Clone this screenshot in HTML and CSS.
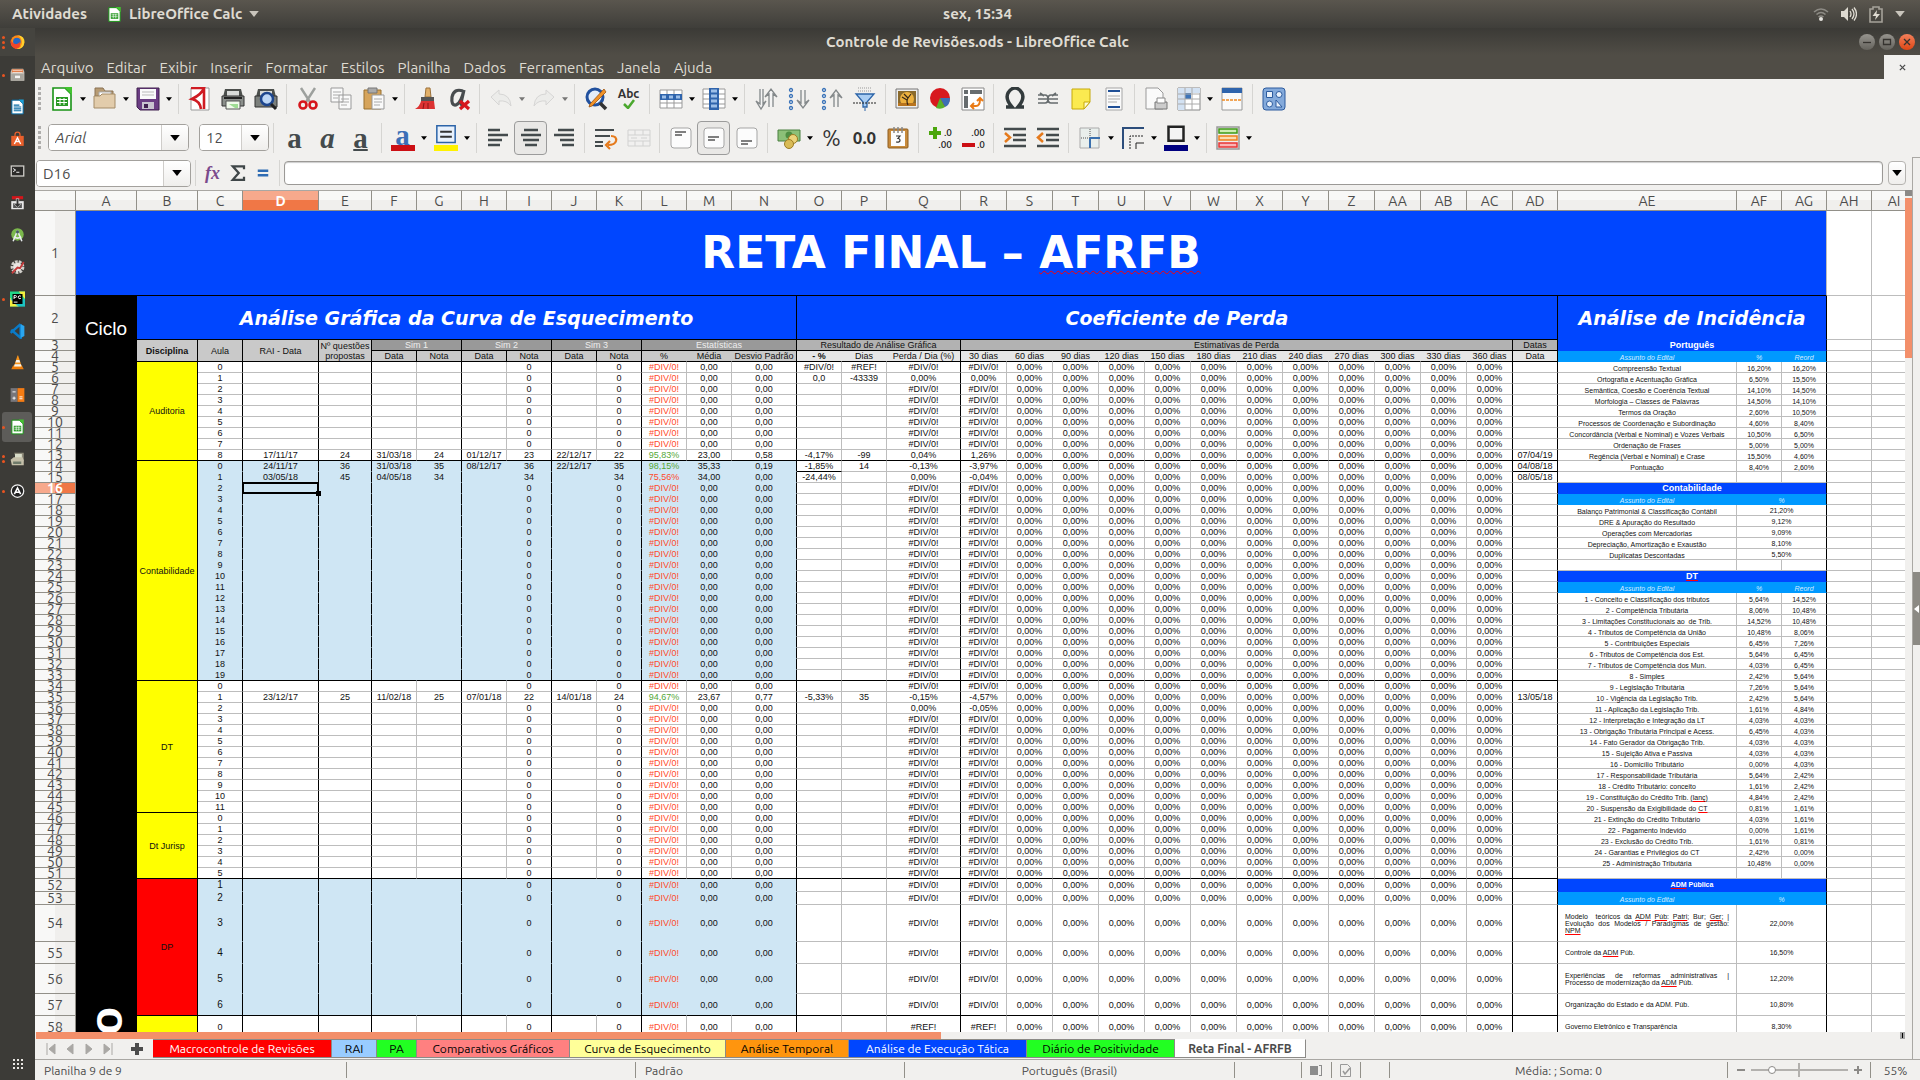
FILE: index.html
```html
<!DOCTYPE html>
<html lang="pt-BR">
<head>
<meta charset="utf-8">
<title>Controle de Revisões.ods - LibreOffice Calc</title>
<link rel="stylesheet" href="styles.css">
</head>
<body>
<svg class="defs" aria-hidden="true">
  <defs>
    <symbol id="down" viewBox="0 0 8 5"><path d="M0 0h8L4 5z"/></symbol>
    <symbol id="calc" viewBox="0 0 24 24"><path d="M3 1h12l6 6v16H3z" fill="#fff" stroke="#189315" stroke-width="1.6"/><path d="M14 0h8v8z" fill="#43c330"/><path d="M6 10h12v9H6z" fill="#2a9a25"/><path d="M7 12.500h10M7 15.500h10M10 11v7M14 11v7" stroke="#fff"/></symbol>
    <symbol id="page" viewBox="0 0 24 24"><path d="M4 1h16v22H4z" fill="#fafafa" stroke="#a5a5a5"/></symbol>
    <symbol id="lines" viewBox="0 0 24 24"><path d="M2 4h12M2 9h20M2 14h14M2 19h12" stroke="#444b4d" stroke-width="2.400"/></symbol>
  </defs>
</svg>

<header class="topbar">
  <div class="topbar-left">
    <button class="plain">Atividades</button>
    <button class="plain app"><svg class="i14"><use href="#calc"/></svg>LibreOffice Calc<svg class="tri-light"><use href="#down"/></svg></button>
  </div>
  <time class="clock">sex, 15:34</time>
  <div class="tray">
    <svg width="16" height="16" viewBox="0 0 16 16" fill="none" stroke="#8d8b85" stroke-width="1.600"><path d="M1 6q7-6 14 0M3.500 8.500q4.500-4 9 0"/><circle cx="8" cy="13" r="2" fill="#e6e4df" stroke="none"/><path d="M5.500 11q2.500-2 5 0"/></svg>
    <svg width="16" height="16" viewBox="0 0 16 16"><path d="M0 5h3l4-4v14l-4-4H0z" fill="#dfdbd2"/><path d="M9 5q2 3 0 6M11 3q4 5 0 10M13 1.500q5 6.500 0 13" fill="none" stroke="#dfdbd2" stroke-width="1.300"/></svg>
    <svg width="14" height="17" viewBox="0 0 14 17"><path d="M4 1h6v2h3v13H1V3h3z" fill="none" stroke="#a5a29a" stroke-width="1.600"/><path d="M8 4 3.500 10H7l-1 4 5-6H7.500z" fill="#dfdbd2"/></svg>
    <svg class="tri-light"><use href="#down"/></svg>
  </div>
</header>

<div class="desktop">
  <nav class="launcher" aria-label="Lançador">
    <ul>
      <li class="dim"><i class="dots three"></i><svg viewBox="0 0 24 24"><circle cx="12" cy="12" r="11" fill="#ff8a16"/><path d="M12 1q12 1 11 12-2 11-13 10 10-2 9-12-1-7-7-10z" fill="#ffd22e"/><circle cx="11" cy="11" r="6" fill="#2567c4"/><path d="M1 8q3 8 10 7 4-1 4-4 4 10-6 12Q0 20 1 8z" fill="#f0452a"/></svg></li>
      <li><i class="dots"></i><svg viewBox="0 0 24 24"><path d="M3 2h18l2 5v14H1V7z" fill="#c9c5bd"/><path d="M3 3h18v5H3z" fill="#e0743c"/><path d="M4 5h16M4 8h16" stroke="#fff"/><path d="M2 10h20v11H2z" fill="#a8a59e"/><path d="M8 13h8v4H8z" fill="#f5f4f2"/></svg></li>
      <li><svg viewBox="0 0 24 24"><path d="M3 1h12l6 6v16H3z" fill="#fff" stroke="#0369a3" stroke-width="1.600"/><path d="M14 0h8v8z" fill="#18a0d8"/><path d="M6 9h9M6 12h12M6 15h12M6 18h12" stroke="#0369a3" stroke-width="1.800"/></svg></li>
      <li><svg viewBox="0 0 24 24"><path d="M2 7h20v16H2z" fill="#e9602c"/><path d="M8 8V5q0-4 4-4t4 4v3" fill="none" stroke="#e9602c" stroke-width="2"/><path d="m7 20 5-10 5 10M9 16h6" fill="none" stroke="#fff" stroke-width="2.200"/></svg></li>
      <li><svg viewBox="0 0 24 24"><path d="M1 3h22v18H1z" fill="#d4d2cd"/><path d="M3 5h18v14H3z" fill="#2b2a28"/><path d="m5 8 4 2.500L5 13M10 14h5" fill="none" stroke="#fff" stroke-width="1.500"/></svg></li>
      <li><svg viewBox="0 0 24 24"><path d="M2 9h20v13H2z" fill="#e8e8e8"/><path d="M5 12h14v8H5z" fill="#555"/><path d="M3 1h18v5H3z" fill="#d3161b"/><path d="M10 5h4v8h4l-6 6-6-6h4z" fill="#333" stroke="#ddd"/></svg></li>
      <li><svg viewBox="0 0 24 24"><circle cx="12" cy="11" r="10" fill="#7bb84c"/><path d="m12 5-7 17M12 5l7 17M6 15q6 4 12 0" fill="none" stroke="#e9eef0" stroke-width="2.400"/><circle cx="12" cy="7" r="2.500" fill="#4a5b66"/></svg></li>
      <li><svg viewBox="0 0 24 24"><circle cx="12" cy="12" r="8" fill="none" stroke="#d2d0cb" stroke-width="6" stroke-dasharray="4 1.500"/><circle cx="12" cy="12" r="7" fill="#e8e6e2"/><path d="m3 22 9-9 4 1 6-10" fill="none" stroke="#c23a3a" stroke-width="3"/></svg></li>
      <li><i class="dots"></i><svg viewBox="0 0 24 24"><path d="M0 0h24v24H0z" fill="#21d789"/><path d="M14 0h10v12zM0 24h14L0 10z" fill="#f5ee3f"/><path d="M0 12 12 24h12V12z" fill="#1ab6e8" opacity=".6"/><path d="M4 4h16v16H4z"/><path d="M6.500 12V6.500h2q2 0 2 1.500t-2 1.500h-2M17.500 7.500q-4-2-4.500 1.500.500 4 4.500 2M6 17h6" fill="none" stroke="#fff" stroke-width="1.500"/></svg></li>
      <li><svg viewBox="0 0 24 24"><path d="M17 1v22L2 10M17 1 1 15" fill="none" stroke="#0a7bc8" stroke-width="4"/><path d="m17 1 6 3v16l-6 3z" fill="#2aa5ee"/></svg></li>
      <li><svg viewBox="0 0 24 24"><path d="m2 22 3-6h14l3 6z" fill="#ee7d0b"/><path d="M12 0h1l6 18H6z" fill="#f7941c"/><path d="m10 7-1.300 4h7.600L15 7zM7.500 14l-1 3.500h12l-1-3.500z" fill="#f4f2ee"/></svg></li>
      <li><svg viewBox="0 0 24 24"><path d="M1 1h11v22H1z" fill="#77767b"/><path d="M12 1h11v22H12z" fill="#f57c14"/><path d="M4 7h5M4 17h5M6.500 14.500v5M15 15h5M15 18h5" stroke="#fff" stroke-width="1.500"/></svg></li>
      <li class="active"><i class="dots"></i><svg><use href="#calc"/></svg></li>
      <li><i class="dots two"></i><svg viewBox="0 0 24 24"><path d="M7 2h15v14H10z" fill="#8d8a7a"/><path d="M8 4h11v7H8z" fill="#d8dcc8"/><path d="m1 13 5-4h14l2 5v8H3z" fill="#c4bfa9"/><path d="M5 16h13v4H5z" fill="#6e7a6a"/></svg></li>
      <li><i class="dots"></i><svg viewBox="0 0 24 24"><circle cx="12" cy="12" r="10" fill="#222" stroke="#f2f2f2" stroke-width="2"/><path d="m7 17 5-10 5 10M9 14h6" fill="none" stroke="#fff" stroke-width="2.500"/></svg></li>
    </ul>
    <svg class="apps" viewBox="0 0 12 12"><path d="M1 2h10M1 6h10M1 10h10" stroke="#e8e6e2" stroke-width="2" stroke-dasharray="2 2"/></svg>
  </nav>

  <main class="window">
    <div class="titlebar">
      <h1>Controle de Revisões.ods - LibreOffice Calc</h1>
      <div class="winbtns">
        <button aria-label="Minimizar"><svg viewBox="0 0 16 16"><path d="M4 8.500h8"/></svg></button>
        <button aria-label="Restaurar"><svg viewBox="0 0 16 16"><path d="M4.500 5.500h7v5h-7z"/></svg></button>
        <button class="close" aria-label="Fechar"><svg viewBox="0 0 16 16"><path d="m5 5 6 6M11 5l-6 6"/></svg></button>
      </div>
    </div>

    <div class="menubar">
      <nav>
        <button>Arquivo</button><button>Editar</button><button>Exibir</button><button>Inserir</button><button>Formatar</button><button>Estilos</button><button>Planilha</button><button>Dados</button><button>Ferramentas</button><button>Janela</button><button>Ajuda</button>
      </nav>
      <button class="closedoc" aria-label="Fechar documento"><svg viewBox="0 0 8 8"><path d="m1 1 6 6M7 1 1 7" stroke="#4c4c4c" stroke-width="1.500"/></svg></button>
    </div>

    <div class="toolbar">
      <i class="grip"></i>
      <button aria-label="Novo"><svg><use href="#calc"/></svg></button><button class="dd" aria-label="Mais"><svg><use href="#down"/></svg></button>
      <button aria-label="Abrir"><svg viewBox="0 0 24 24"><path d="M2 4V1h8l2 3h8v5H2z" fill="#b79b73" stroke="#8a7355"/><path d="M6 5h12v8H6z" fill="#fff" stroke="#aaa"/><path d="M1 9h6l2-2h13v14H1z" fill="#e2ccab" stroke="#a48b67"/></svg></button><button class="dd" aria-label="Mais"><svg><use href="#down"/></svg></button>
      <button aria-label="Salvar"><svg viewBox="0 0 24 24"><path d="M1 1h22v22H4l-3-3z" fill="#6b3d83" stroke="#41204f"/><path d="M4 2h16v10H4z" fill="#fafafa"/><path d="M6 5h12M6 8h12" stroke="#bbb"/><path d="M6 15h12v7H6z" fill="#c9c3cf"/><path d="M8 17h4v4H8z" fill="#41204f"/></svg></button><button class="dd" aria-label="Mais"><svg><use href="#down"/></svg></button>
      <i class="sep"></i>
      <button aria-label="Exportar PDF"><svg viewBox="0 0 24 24"><path d="M3 1h18v22H3z" fill="#fff" stroke="#999"/><path d="M3 1h13q-2 6-12 11 8 2 9 10M16 2v20" fill="none" stroke="#cf1b22" stroke-width="2.600"/></svg></button>
      <button aria-label="Imprimir"><svg viewBox="0 0 24 24"><path d="M4 2h16l2 8H2z" fill="#4c4f4c"/><path d="M6 4h12v6H6z" fill="#d9dbd9"/><path d="M1 9h22v10H1z" fill="#8b8f8b" stroke="#333"/><path d="M3 11h18" stroke="#222" stroke-width="2"/><path d="M5 14h14v8H5z" fill="#f1faec" stroke="#555"/><path d="m8 17 6 4h3v-4z" fill="#9fdc94"/></svg></button>
      <button aria-label="Visualizar impressão"><svg viewBox="0 0 24 24"><path d="M4 2h16l2 8H2z" fill="#4c4f4c"/><path d="M6 4h12v6H6z" fill="#d9dbd9"/><path d="M1 9h22v11H1z" fill="#7b7f7b" stroke="#333"/><circle cx="13" cy="12" r="6" fill="#bcd6f5" stroke="#1d468e" stroke-width="2.500"/><path d="m17 17 5 5" stroke="#222" stroke-width="3"/></svg></button>
      <i class="sep"></i>
      <button aria-label="Cortar"><svg viewBox="0 0 24 24" fill="none"><path d="m5 1 9 14M19 1l-9 14" stroke="#9da09d" stroke-width="2.400"/><circle cx="7" cy="18" r="3.500" stroke="#d6161c" stroke-width="2.600"/><circle cx="17" cy="18" r="3.500" stroke="#d6161c" stroke-width="2.600"/></svg></button>
      <button aria-label="Copiar"><svg viewBox="0 0 24 24"><path d="M2 1h12v14H2zM10 8h12v14H10z" fill="#fafafa" stroke="#999"/><path d="M4 5h8M4 8h6M4 11h5M12 12h8M12 15h8M12 18h6" stroke="#aaa"/></svg></button>
      <button aria-label="Colar"><svg viewBox="0 0 24 24"><path d="M2 3h17v19H2z" fill="#d6a45b" stroke="#99702f"/><path d="M6 1h9v5H6z" fill="#aaa" stroke="#777"/><path d="M10 8h12v14H10z" fill="#fafafa" stroke="#999"/><path d="M12 12h8M12 15h8M12 18h6" stroke="#aaa"/></svg></button><button class="dd" aria-label="Mais"><svg><use href="#down"/></svg></button>
      <i class="sep"></i>
      <button aria-label="Clonar formatação"><svg viewBox="0 0 24 24"><path d="M12 1h4l1 9h-6z" fill="#e2b069" stroke="#9b713b"/><path d="M7 10h13v4H7z" fill="#555"/><path d="M7 14h13l1 8H1q5-3 6-8z" fill="#dc3232"/><path d="m9 22 1-6M14 22v-6" stroke="#8a1515"/></svg></button>
      <button aria-label="Limpar formatação"><svg viewBox="0 0 24 24" fill="none"><path d="M16 4q-9-3-11 6-1 9 4 8 5-2 8-15l-3 13q0 3 3 2" stroke="#484c4e" stroke-width="3.200"/><path d="m13 14 9 8M22 14l-9 8" stroke="#d6161c" stroke-width="3.200"/></svg></button>
      <i class="sep"></i>
      <button class="off" aria-label="Desfazer"><svg viewBox="0 0 24 24" fill="#e9e9e8" stroke="#bcbcbc"><path d="m2 10 8-7v4q11 0 12 12-4-6-12-5v4z"/></svg></button><button class="dd off" aria-label="Mais"><svg><use href="#down"/></svg></button>
      <button class="off" aria-label="Refazer"><svg viewBox="0 0 24 24" fill="#e9e9e8" stroke="#bcbcbc"><path d="m22 10-8-7v4Q3 7 2 19q4-6 12-5v4z"/></svg></button><button class="dd off" aria-label="Mais"><svg><use href="#down"/></svg></button>
      <i class="sep"></i>
      <button aria-label="Localizar"><svg viewBox="0 0 24 24"><circle cx="11" cy="10" r="8" fill="#e4eefb" stroke="#22519e" stroke-width="3"/><path d="m16 16 6 6" stroke="#333" stroke-width="3.500"/><path d="M20 2 6 17l-1 3 3-1L22 5z" fill="#f0932b" stroke="#9d5410" stroke-width=".8"/></svg></button>
      <button class="abc" aria-label="Ortografia"><span>Abc</span><svg viewBox="0 0 14 10"><path d="m2 5 4 4 6-8" fill="none" stroke="#4ba82e" stroke-width="2.500"/></svg></button>
      <i class="sep"></i>
      <button aria-label="Linha"><svg viewBox="0 0 24 24"><path d="M1 3h22v18H1zM1 16h22M8 3v18M15 3v18" fill="#fff" stroke="#999"/><path d="M1 7h22v6H1z" fill="#2f64ac"/><path d="M3 10h4M10 10h4M17 10h4" stroke="#9dbfe8" stroke-width="3"/></svg></button><button class="dd" aria-label="Mais"><svg><use href="#down"/></svg></button>
      <button aria-label="Coluna"><svg viewBox="0 0 24 24"><path d="M1 2h22v19H1zM1 7h22M1 12h22M1 17h22" fill="#fff" stroke="#999"/><path d="M7 1h10v22H7z" fill="#2f64ac"/><path d="M9 4h6M9 9h6M9 14h6M9 19h6" stroke="#9dbfe8" stroke-width="3"/></svg></button><button class="dd" aria-label="Mais"><svg><use href="#down"/></svg></button>
      <i class="sep"></i>
      <button aria-label="Classificar"><svg viewBox="0 0 24 24" fill="#f4f4f4" stroke="#83888a" stroke-width="1.300"><path d="M6 2v15l-4-3 5 8 5-8-3 3V2M15 20V7l-4 3 6-8 6 8-4-3v13"/></svg></button>
      <button aria-label="Ordem crescente"><svg viewBox="0 0 24 24" fill="none" stroke="#3a73b9" stroke-width="1.300"><circle cx="4" cy="3" r="1.500"/><circle cx="4" cy="9" r="1.500"/><circle cx="4" cy="15" r="1.500"/><circle cx="4" cy="21" r="1.500"/><path d="M14 3v13l-4-3 6 8 6-8-4 3V3" stroke="#83888a"/></svg></button>
      <button aria-label="Ordem decrescente"><svg viewBox="0 0 24 24" fill="none" stroke="#3a73b9" stroke-width="1.300"><circle cx="4" cy="3" r="1.500"/><circle cx="4" cy="9" r="1.500"/><circle cx="4" cy="15" r="1.500"/><circle cx="4" cy="21" r="1.500"/><path d="M14 20V8l-4 3 6-8 6 8-4-3v12" stroke="#83888a"/></svg></button>
      <button aria-label="Autofiltro"><svg viewBox="0 0 24 24"><path d="M5 1h14M5 4h14" stroke="#999" stroke-dasharray="1 1"/><path d="M3 7h18l-7 8v5h-4v-5z" fill="#a9cdf3" stroke="#2c64a8" stroke-width="1.300"/><path d="M0 16h24" stroke="#222" stroke-dasharray="2 1"/><path d="M12 21v3" stroke="#2c64a8"/></svg></button>
      <i class="sep"></i>
      <button aria-label="Imagem"><svg viewBox="0 0 24 24"><path d="M1 2h22v19H1z" fill="#eee" stroke="#777"/><path d="M3 4h18v15H3z" fill="#8a6a2c"/><circle cx="12" cy="12" r="7" fill="#edb13f"/><path d="M3 16h18v3H3z" fill="#b8741e"/><path d="M13 18q-2-4 0-7l3-4M13 11 9 7M12 13l-5-3" fill="none" stroke="#372716" stroke-width="1.200"/></svg></button>
      <button aria-label="Gráfico"><svg viewBox="0 0 24 24"><circle cx="12" cy="11" r="10" fill="#d7191e"/><path d="M12 11h10q0 7-5 9z" fill="#3d6fb5"/><path d="m12 11 5 9q-4 3-9 1z" fill="#58b32b"/></svg></button>
      <button aria-label="Tabela dinâmica"><svg viewBox="0 0 24 24"><path d="M1 1h22v22H1z" fill="#fff" stroke="#888"/><path d="M3 3h4v4H3zM9 3h12v4H9zM3 9h4v12H3z" fill="#676c6e"/><path d="M11 19h4q4 0 4-7M16 14l3-3 3 3M13 16l-3 3 3 3" fill="none" stroke="#ea7b16" stroke-width="2"/></svg></button>
      <i class="sep"></i>
      <button aria-label="Caractere especial"><svg viewBox="0 0 24 24"><path d="M3 20h6Q2 12 5 6q3-5 7-5t7 5q3 6-4 14h6" fill="none" stroke="#333b3d" stroke-width="3.500"/></svg></button>
      <button aria-label="Hiperlink"><svg viewBox="0 0 24 24" fill="none" stroke="#656b6d" stroke-width="1.700"><path d="M2 8h7q3 0 3 4t-3 4H2M22 8h-7q-3 0-3 4t3 4h7M2 12h20M4 6l4 3M20 6l-4 3"/></svg></button>
      <button aria-label="Anotação"><svg viewBox="0 0 24 24"><path d="M3 2h18v13l-6 7H3z" fill="#fbea50" stroke="#c6a90b"/><path d="M21 15h-6v7z" fill="#fffbd0" stroke="#c6a90b"/></svg></button>
      <button aria-label="Cabeçalho e rodapé"><svg viewBox="0 0 24 24"><use href="#page"/><path d="M6 4h12M6 20h12" stroke="#1f4f96" stroke-width="2"/><path d="M6 9h12M6 12h12M6 15h9" stroke="#aaa"/></svg></button>
      <i class="sep"></i>
      <button aria-label="Área de impressão"><svg viewBox="0 0 24 24"><path d="M2 1h12l5 5v16H2z" fill="#fafafa" stroke="#999"/><path d="M11 15h12v7H11z" fill="#ccc" stroke="#777"/><path d="M13 11h8v5h-8z" fill="#fff" stroke="#888"/></svg></button>
      <button aria-label="Congelar"><svg viewBox="0 0 24 24"><path d="M1 1h22v22H1z" fill="#fff" stroke="#888"/><path d="M1 1h22v5H1zM1 6h7v17H1z" fill="#d3e2f3"/><path d="M8 6h6v6H8z" fill="#3d74b8"/><path d="M8 1v22M15 1v22M1 7h22M1 12h22M1 17h22" stroke="#aaa" fill="none"/></svg></button><button class="dd" aria-label="Mais"><svg><use href="#down"/></svg></button>
      <button aria-label="Dividir"><svg viewBox="0 0 24 24"><path d="M2 1h20v22H2z" fill="#fafafa" stroke="#999"/><path d="M2 1h20v5H2z" fill="#2f64ac"/><path d="M2 13h20" stroke="#ef8a22" stroke-width="1.500" stroke-dasharray="3 1"/></svg></button>
      <i class="sep"></i>
      <button aria-label="Desenho"><svg viewBox="0 0 24 24"><rect x="1" y="1" width="22" height="22" rx="3" fill="#84aadb" stroke="#2c5b9e"/><g fill="#e9f1fb" stroke="#2c5b9e"><path d="M4.500 4.500h6v6h-6zM14 13v7h6z"/><circle cx="17" cy="7.500" r="3"/><circle cx="7.500" cy="17" r="3"/></g></svg></button>
    </div>

    <div class="toolbar">
      <i class="grip"></i>
      <div class="combo font"><select aria-label="Nome da fonte"><option>Arial</option></select><span><svg><use href="#down"/></svg></span></div>
      <div class="combo size"><select aria-label="Tamanho da fonte"><option>12</option></select><span><svg><use href="#down"/></svg></span></div>
      <i class="sep"></i>
      <button class="letter" aria-label="Negrito"><b>a</b></button>
      <button class="letter" aria-label="Itálico"><em>a</em></button>
      <button class="letter" aria-label="Sublinhado"><u>a</u></button>
      <i class="sep"></i>
      <button class="letter swatch red" aria-label="Cor da fonte"><b>a</b></button><button class="dd" aria-label="Mais"><svg><use href="#down"/></svg></button>
      <button class="swatch yellow" aria-label="Cor de realce"><svg viewBox="0 0 24 24"><path d="M1 1h22v20H1z" fill="#e8f1fc" stroke="#2c64a8" stroke-width="1.800"/><path d="M5 8h14M5 14h14" stroke="#333" stroke-width="2.400"/></svg></button><button class="dd" aria-label="Mais"><svg><use href="#down"/></svg></button>
      <i class="sep"></i>
      <button aria-label="Alinhar à esquerda"><svg><use href="#lines"/></svg></button>
      <button class="on" aria-label="Centralizar"><svg viewBox="0 0 24 24"><path d="M5 4h14M2 9h20M4 14h16M6 19h12" stroke="#444b4d" stroke-width="2.400"/></svg></button>
      <button aria-label="Alinhar à direita"><svg viewBox="0 0 24 24"><path d="M6 4h16M2 9h20M8 14h14M10 19h12" stroke="#444b4d" stroke-width="2.400"/></svg></button>
      <i class="sep"></i>
      <button aria-label="Quebrar texto"><svg viewBox="0 0 24 24" fill="none"><path d="M1 4h19M1 10h15M1 16h8M1 20h8" stroke="#444b4d" stroke-width="2.200"/><path d="M17 10q6 0 5 5-1 4-8 4M16 15l-4 4 4 4" stroke="#e57a1c" stroke-width="2.200"/></svg></button>
      <button class="off" aria-label="Mesclar"><svg viewBox="0 0 24 24" fill="#f1f1f1" stroke="#b5b5b5"><path d="M1 4h22v16H1zM1 9h22M1 15h22M8 4v5M16 4v5M8 15v5M16 15v5M4 12h6M14 12h6"/></svg></button>
      <i class="sep"></i>
      <button aria-label="Alinhar em cima"><svg viewBox="0 0 24 24"><rect x="2" y="2" width="20" height="20" rx="3" fill="#fcfcfc" stroke="#a5a5a5"/><path d="M6 6h11M6 9h7" stroke="#555" stroke-width="1.300"/></svg></button>
      <button class="on" aria-label="Centralizar verticalmente"><svg viewBox="0 0 24 24"><rect x="2" y="2" width="20" height="20" rx="3" fill="#fcfcfc" stroke="#a5a5a5"/><path d="M6 11h11M6 14h7" stroke="#555" stroke-width="1.300"/></svg></button>
      <button aria-label="Alinhar embaixo"><svg viewBox="0 0 24 24"><rect x="2" y="2" width="20" height="20" rx="3" fill="#fcfcfc" stroke="#a5a5a5"/><path d="M6 15h11M6 18h7" stroke="#555" stroke-width="1.300"/></svg></button>
      <i class="sep"></i>
      <button aria-label="Moeda"><svg viewBox="0 0 24 24"><path d="M1 4h22v11H1z" fill="#8cc078" stroke="#4b8040"/><circle cx="12" cy="9" r="3.500" fill="#4f8e43"/><circle cx="16" cy="13" r="4.500" fill="#ecd47b" stroke="#9c7c24"/><circle cx="12" cy="18" r="4.500" fill="#d9bb56" stroke="#9c7c24"/></svg></button><button class="dd" aria-label="Mais"><svg><use href="#down"/></svg></button>
      <button class="pct" aria-label="Porcentagem">%</button>
      <button class="num" aria-label="Número">0.0</button>
      <button aria-label="Data"><svg viewBox="0 0 24 24"><rect x="2" y="3" width="20" height="19" rx="1" fill="#c88b3c" stroke="#8d5d1e"/><path d="M5 5h14v15H5z" fill="#fcfcfc"/><path d="M8 1v6M12 1v6M16 1v6" stroke="#888" stroke-width="1.500"/><path d="M10 10h4l-2 2.500q2 0 2 2t-4 1.500" fill="none" stroke="#333" stroke-width="1.200"/></svg></button>
      <i class="sep"></i>
      <button class="dec" aria-label="Adicionar casa decimal"><svg viewBox="0 0 24 24"><path d="M7 1v12M1 7h12" stroke="#4ba60c" stroke-width="4"/></svg><span>.0<br>.00</span></button>
      <button class="dec" aria-label="Excluir casa decimal"><svg viewBox="0 0 24 24"><path d="M1 19h13" stroke="#cc0f14" stroke-width="4"/></svg><span>.00<br>.0</span></button>
      <i class="sep"></i>
      <button aria-label="Aumentar recuo"><svg viewBox="0 0 24 24" fill="none"><path d="M1 3h22M10 9h13M10 14h13M1 20h22" stroke="#444b4d" stroke-width="2.300"/><path d="m2 7 5 4.500L2 16" stroke="#e57a1c" stroke-width="2.500"/></svg></button>
      <button aria-label="Diminuir recuo"><svg viewBox="0 0 24 24" fill="none"><path d="M1 3h22M10 9h13M10 14h13M1 20h22" stroke="#444b4d" stroke-width="2.300"/><path d="m7 7-5 4.500L7 16" stroke="#e57a1c" stroke-width="2.500"/></svg></button>
      <i class="sep"></i>
      <button aria-label="Bordas"><svg viewBox="0 0 24 24"><path d="M2 2h19v20H2z" fill="#e9efec" stroke="#aaa"/><path d="M12 3v9M3 12h9" stroke="#555" stroke-dasharray="1 1"/><path d="M12 12h10M12 12v10" stroke="#3a70ad" stroke-width="2"/></svg></button><button class="dd" aria-label="Mais"><svg><use href="#down"/></svg></button>
      <button aria-label="Estilo de borda"><svg viewBox="0 0 24 24" fill="none"><path d="M2 23V2h21" stroke="#2c4d7b" stroke-width="2"/><path d="M9 23V10h14" stroke="#222" stroke-dasharray="2 1"/><path d="M15 23v-6h8" stroke="#222"/></svg></button><button class="dd" aria-label="Mais"><svg><use href="#down"/></svg></button>
      <button class="swatch navy" aria-label="Cor da borda"><svg viewBox="0 0 24 24"><path d="M3 2h18v17H3z" fill="#f4f4f4" stroke="#222" stroke-width="3"/></svg></button><button class="dd" aria-label="Mais"><svg><use href="#down"/></svg></button>
      <i class="sep"></i>
      <button aria-label="Formatação condicional"><svg viewBox="0 0 24 24" stroke-width="1.500"><path d="M1 1h22v22H1z" fill="#eee" stroke="#999"/><path d="M3 3h18v4H3z" fill="#cdeeb4" stroke="#3f9a16"/><path d="M3 10h18v4H3z" fill="#fbdcb1" stroke="#ef7f1a"/><path d="M3 17h18v4H3z" fill="#fbb4b4" stroke="#e83535"/></svg></button><button class="dd" aria-label="Mais"><svg><use href="#down"/></svg></button>
    </div>

    <div class="formulabar">
      <div class="combo name"><select aria-label="Caixa de nome"><option>D16</option></select><span><svg><use href="#down"/></svg></span></div>
      <i class="sep"></i>
      <button class="fx" aria-label="Assistente de funções">fx</button>
      <button aria-label="Soma"><svg viewBox="0 0 24 24"><path d="M20 7V3H5l8 9-8 9h15v-4" fill="none" stroke="#3f4648" stroke-width="3"/></svg></button>
      <button aria-label="Função"><svg viewBox="0 0 24 24"><path d="M5 9h14M5 15h14" stroke="#2f6cb3" stroke-width="3.500"/></svg></button>
      <i class="sep"></i>
      <input type="text" aria-label="Linha de entrada">
      <button class="expand" aria-label="Expandir"><svg><use href="#down"/></svg></button>
    </div>

    <div class="workarea">
      <div class="gridpane">
        <div class="sheetrow">
          <div class="sheetwrap"><table id="sheet"></table></div>
          <div class="vscroll"><i></i></div>
        </div>
        <div class="hscroll"><i></i><b></b></div>
        <div class="tabs">
          <div class="tabnav">
            <button aria-label="Primeira"><svg viewBox="0 0 10 12"><path d="M1 0v12M9 1v10L3 6z"/></svg></button>
            <button aria-label="Anterior"><svg viewBox="0 0 10 12"><path d="M8 1v10L2 6z"/></svg></button>
            <button aria-label="Próxima"><svg viewBox="0 0 10 12"><path d="M2 1v10l6-5z"/></svg></button>
            <button aria-label="Última"><svg viewBox="0 0 10 12"><path d="M9 0v12M1 1v10l6-5z"/></svg></button>
            <button class="add" aria-label="Adicionar planilha"><svg viewBox="0 0 12 12"><path d="M6 0v12M0 6h12"/></svg></button>
          </div>
          <button class="t1">Macrocontrole de Revisões</button><button class="t2">RAI</button><button class="t3">PA</button><button class="t4">Comparativos Gráficos</button><button class="t5">Curva de Esquecimento</button><button class="t6">Análise Temporal</button><button class="t7">Análise de Execução Tática</button><button class="t8">Diário de Positividade</button><button class="t9">Reta Final - AFRFB</button>
        </div>
      </div>
      <div class="sidebar"><button aria-label="Mostrar barra lateral"><svg viewBox="0 0 5 8"><path d="M5 0v8L0 4z" fill="#fff"/></svg></button></div>
    </div>

    <footer class="status">
      <span class="left">Planilha 9 de 9</span><span></span><span class="left">Padrão</span><span>Português (Brasil)</span><span></span>
      <span><svg width="13" height="11" viewBox="0 0 13 11"><path d="M0 1h8v9H0z" fill="#8c8c8c"/><path d="M9 .5h3M9 10.500h3M11.500 0v11" stroke="#8c8c8c"/></svg></span>
      <span><svg width="12" height="13" viewBox="0 0 12 13" fill="none" stroke="#999"><path d="M.5.500h7l3 3v9H.5z"/><path d="m3 7 2 3 5-6" stroke-width="1.500"/></svg></span>
      <span></span><span>Média: ; Soma: 0</span>
      <span class="zoom"><button aria-label="Reduzir"><svg viewBox="0 0 8 8"><path d="M0 4h8"/></svg></button><input type="range" min="0" max="100" value="20" aria-label="Zoom"><button aria-label="Ampliar"><svg viewBox="0 0 8 8"><path d="M0 4h8M4 0v8"/></svg></button></span>
      <span>55%</span>
    </footer>
  </main>
</div>
<script src="script.js"></script>
</body>
</html>
```

FILE: styles.css
```css
* { box-sizing: border-box; }

body {
  margin: 0;
  height: 100vh;
  display: flex;
  flex-direction: column;
  overflow: hidden;
  background: #f1f0ee;
  color: #4c4c4c;
  font-family: Ubuntu, "Noto Sans", sans-serif;
  font-size: 15px;
}

button {
  margin: 0;
  padding: 0;
  border: 0;
  background: none;
  color: inherit;
  font: inherit;
  display: flex;
  align-items: center;
  justify-content: center;
  white-space: nowrap;
}

.defs { display: none; }

/* top panel */
.topbar {
  flex: none;
  height: 28px;
  display: grid;
  grid-template-columns: 1fr auto 1fr;
  align-items: center;
  background: linear-gradient(#5a564e, #3f3e3a);
  color: #dfdbd2;
  font-weight: 600;
  line-height: 20px;
}
.topbar-left { display: flex; gap: 20px; padding-left: 12px; }
.app { gap: 7px; }
.i14 { width: 15px; height: 17px; }
.tri-light { width: 10px; height: 6px; fill: #c9c5bc; }
.clock { margin-left: 35px; }
.tray { display: flex; justify-content: flex-end; align-items: center; gap: 12px; padding-right: 15px; }

.desktop { flex: 1; min-height: 0; display: flex; }

/* launcher */
.launcher {
  flex: none;
  width: 35px;
  display: flex;
  flex-direction: column;
  justify-content: space-between;
  background: #3c3b37;
}
.launcher ul { list-style: none; margin: 0; padding: 0; }
.launcher li {
  height: 32px;
  display: flex;
  align-items: center;
  justify-content: center;
  position: relative;
}
.launcher li svg { width: 15px; height: 16px; }
.launcher .dim { background: #45443f; height: 28px; margin-bottom: 3px; }
.launcher .active::before {
  content: "";
  position: absolute;
  inset: 1px 3px 1px 2px;
  border-radius: 3px;
  background: #5d5c59;
}
.launcher .active svg { position: relative; }
.dots { position: absolute; left: 2px; width: 3px; height: 3px; border-radius: 50%; background: #e95420; }
.dots.two { box-shadow: 0 5px #e95420; margin-top: -5px; }
.dots.three { box-shadow: 0 5px #e95420, 0 -5px #e95420; }
.apps { width: 12px; height: 12px; margin: 0 auto 10px; }

.window { flex: 1; min-width: 0; display: flex; flex-direction: column; }

.titlebar {
  flex: none;
  height: 27px;
  display: grid;
  grid-template-columns: 1fr auto 1fr;
  align-items: center;
  background: linear-gradient(#3b3a36, #504d46);
  color: #dfdbd2;
}
.titlebar h1 { grid-column: 2; margin: 0; font-size: 15px; font-weight: 700; line-height: 20px; }
.winbtns { display: flex; justify-content: flex-end; gap: 4px; padding-right: 5px; }
.winbtns button { width: 16px; height: 16px; border-radius: 50%; background: linear-gradient(#96948e, #65635d); }
.winbtns .close { background: linear-gradient(#f3805b, #dd4614); }
.winbtns svg { width: 16px; height: 16px; fill: none; stroke: #35332f; stroke-width: 1.3; }

.menubar { flex: none; height: 24px; display: flex; justify-content: space-between; background: #504d46; color: #dfdbd2; }
.menubar nav { display: flex; gap: 13px; padding-left: 6px; }
.closedoc { width: 36px; background: #f1f0ee; }
.closedoc svg { width: 7px; height: 7px; }

/* toolbars */
.toolbar { flex: none; height: 39px; display: flex; align-items: center; }
.toolbar > button { width: 33px; height: 34px; flex: none; }
.toolbar > button > svg { width: 24px; height: 24px; }
.toolbar > .dd { width: 10px; }
.toolbar > .dd > svg { width: 6px; height: 4px; fill: #000; }
.toolbar > .off { opacity: .5; }
.toolbar > .on { border: 1px solid #9b9b9b; border-radius: 4px; background: #e9e8e6; }
.sep { flex: none; width: 1px; height: 30px; margin: 0 4px; background: #d6d5d2; }
.grip { flex: none; width: 3px; height: 24px; margin: 0 4px 0 3px; background: repeating-linear-gradient(#aeadab 0 3px, transparent 3px 5px); }
.abc, .toolbar > .abc { flex-direction: column; font-size: 12px; font-weight: 700; line-height: 11px; color: #333; }
.toolbar > .abc svg { width: 14px; height: 10px; }
.letter { font-family: "Liberation Serif", serif; font-size: 29px; line-height: 22px; color: #444b4d; }
.letter em { font-weight: 700; }
.letter u { font-weight: 700; text-decoration-thickness: 2px; }
.toolbar > .swatch { flex-direction: column; }
.toolbar > .swatch > svg { flex: none; width: 20px; height: 20px; }
.swatch::after { content: ""; width: 24px; height: 6px; flex: none; background: #cc0f14; }
.swatch.red b { color: #3b6fb6; line-height: 20px; }
.swatch.yellow::after { background: #fff200; }
.swatch.navy::after { background: #000080; }
.pct { font-size: 22px; color: #333; }
.num { font-size: 17px; font-weight: 700; color: #333; }
.dec { position: relative; font-size: 10px; line-height: 12px; color: #222; text-align: right; font-weight: 500; }
.dec span { position: absolute; right: 4px; top: 6px; }

.combo {
  flex: none;
  height: 27px;
  display: flex;
  border: 1px solid #a3a19d;
  border-radius: 4px;
  background: #fff;
  overflow: hidden;
}
.combo select {
  flex: 1;
  min-width: 0;
  appearance: none;
  border: 0;
  padding: 0 6px;
  background: #fff;
  color: #4c4c4c;
  font: inherit;
}
.combo span { width: 27px; display: flex; align-items: center; justify-content: center; border-left: 1px solid #cfcdca; background: linear-gradient(#fff, #efeeec); }
.combo svg { width: 10px; height: 6px; fill: #000; }
.font { width: 141px; margin: 0 10px 0 3px; font-style: italic; }
.size { width: 70px; }
.name { width: 155px; }

.formulabar { flex: none; height: 33px; display: flex; align-items: center; padding: 0 14px 1px 1px; }
.formulabar .sep { height: 26px; margin: 0 4px; }
.formulabar button { width: 25px; height: 26px; flex: none; }
.formulabar button svg { width: 18px; height: 18px; }
.formulabar .fx { font-family: "Liberation Serif", serif; font-style: italic; font-weight: 700; font-size: 18px; color: #7b4a8c; }
.formulabar input { flex: 1; min-width: 0; height: 24px; border: 1px solid #9b9996; border-radius: 4px; background: #fff; box-shadow: inset 0 1px 1px #ccc; font: inherit; }
.formulabar .expand { width: 18px; height: 24px; margin-left: 5px; border: 1px solid #b5b3b0; border-radius: 4px; background: linear-gradient(#fff, #efeeec); }
.formulabar .expand svg { width: 10px; height: 6px; }

/* work area */
.workarea { flex: 1; min-height: 0; display: flex; }
.gridpane { flex: 1; min-width: 0; display: flex; flex-direction: column; }
.sheetrow { flex: 1; min-height: 0; display: flex; }
.sheetwrap { flex: 1; min-width: 0; overflow: hidden; background: #fff; }
.vscroll { flex: none; width: 7px; border-top: 6px solid #8c8a87; }
.vscroll i { display: block; height: 160px; margin-top: 2px; background: #f38f6a; }
.hscroll { flex: none; height: 7px; display: flex; justify-content: space-between; padding: 0 7px 0 1px; }
.hscroll i { width: 48.4%; background: #f38f6a; }
.hscroll b { width: 5px; background: #000; border: solid #a5a5a5; border-width: 1px 2px; }
.sidebar { flex: none; width: 8px; display: flex; align-items: center; margin-top: -33px; border: solid #aaa8a4; border-width: 1px 0 0 1px; }
.sidebar button { width: 7px; height: 73px; background: #8c8a84; }
.sidebar svg { width: 5px; height: 8px; }

/* sheet */
#sheet {
  width: 100%;
  min-width: 1882px;
  table-layout: fixed;
  border-collapse: separate;
  border-spacing: 0;
  font: 9px/10px "Liberation Sans", Arial, sans-serif;
  color: #111;
}
#sheet th, #sheet td {
  padding: 0;
  border: solid #bdbdbd;
  border-width: 0 1px 1px 0;
  text-align: center;
  vertical-align: middle;
  white-space: nowrap;
  background-color: #fff;
}
#sheet .colhead, #sheet .rowhead {
  border-color: #929089;
  color: #4c4c4c;
  font-family: Ubuntu, "Noto Sans", sans-serif;
  font-size: 14px;
  font-weight: 400;
  overflow: hidden;
}
#sheet .colhead { height: 21px; border-top: 1px solid #a9a7a3; background: linear-gradient(#f8f8f7 50%, #f0efed 50%); line-height: 18px; }
#sheet .rowhead { background: linear-gradient(90deg, #f8f8f7 50%, #f0efed 50%); }
#sheet .colhead.cur { background: linear-gradient(#f7a98c 50%, #f07746 50%); color: #fff; font-weight: 700; }
#sheet .rowhead.cur { background: linear-gradient(90deg, #f7a98c 50%, #f07746 50%); color: #fff; font-weight: 700; }

#sheet .title { background: #0046ff; color: #fff; font: bold 44px/50px "DejaVu Sans", sans-serif; }
#sheet .section { background: #0046ff; color: #fff; font: italic bold 19px/24px "DejaVu Sans", sans-serif; }
#sheet .cycle { background: #000; border-color: #000; color: #fff; font-size: 19px; }
#sheet .cyclename { background: #000; border-color: #000; color: #fff; vertical-align: bottom; }
.cyclename span {
  display: inline-block;
  writing-mode: vertical-rl;
  rotate: 180deg;
  height: 20px;
  font: bold 46px/46px "Liberation Sans", Arial, sans-serif;
}
#sheet .h1g { background: #c9c9c9; line-height: 10px; }
#sheet .h2g { background: #999; color: #eee; }
#sheet .h3g { background: #b2b2b2; border-right-color: #b2b2b2; }
#sheet .h4g { background: #e6e6e6; border-right-color: #e6e6e6; }
#sheet .h5g { background: #c9c9c9; border-right-color: #c9c9c9; }
#sheet .bold { font-weight: 700; }
#sheet .yellow { background: #ff0; }
#sheet .red { background: #f00; }
#sheet .tint { background: #cfe6f4; border-color: #cfe6f4; }
#sheet .big { font-size: 10px; }
#sheet .bad { color: #ff4a2b; }
#sheet .good { color: #54a838; }
#sheet .subject { background: #0046ff; border-color: #0046ff; color: #fff; font-weight: 700; }
#sheet .subject.small { font-size: 7px; }
#sheet .subhead { background: #09f; border-color: #09f; color: #d5ecff; font-size: 7px; font-style: italic; line-height: 7px; padding-top: 3px; }
#sheet .topic { font-size: 7px; line-height: 7px; padding-top: 3px; }
#sheet .adm { font-size: 7px; line-height: 7px; }
#sheet .adm.left { padding: 0 7px; text-align: left; }
.adm .just { display: block; text-align-last: justify; }
.typo { text-decoration: underline 1px #f00; text-underline-offset: 1px; }
.title .typo { text-decoration-style: wavy; text-underline-offset: 2px; }
#sheet .kr { border-right-color: #000; }
#sheet .kb { border-bottom-color: #000; }
#sheet .selected { position: relative; }
.selected::before { content: ""; position: absolute; inset: -1px; border: 2px solid #000; }
.selected::after { content: ""; position: absolute; right: -3px; bottom: -3px; width: 5px; height: 5px; background: #000; }

/* sheet tabs */
.tabs {
  flex: none;
  height: 20px;
  display: grid;
  grid-template-columns: 118px 179px 45px 40px 153px 156px 123px 178px 148px 131px;
  color: #000;
  font-size: 12px;
}
.tabs > button { border: 1px solid #8c8a87; border-left: 0; line-height: 16px; height: 19px; }
.t1 { background: #f00; color: #fff; }
.t2 { background: #9cf; }
.t3 { background: #2f2; }
.t4 { background: #ff8080; }
.t5 { background: #ff9; }
.t6 { background: #ff950e; }
.t7 { background: #0046ff; color: #fff; }
.t8 { background: #2f2; }
.tabs > .t9 { background: #fff; color: #4c4c4c; font-weight: 700; border-top-color: #fff; }
.tabnav { display: flex; align-items: center; padding-left: 11px; gap: 9px; }
.tabnav button svg { width: 10px; height: 12px; fill: #aaa8a5; stroke: #aaa8a5; }
.tabnav .add { margin-left: 9px; }
.tabnav .add svg { width: 12px; height: 12px; stroke: #4c4c4c; stroke-width: 4; }

.status {
  flex: none;
  height: 21px;
  display: grid;
  grid-template-columns: 312fr 289fr 269fr 330fr 67px 30px 29px 29px 338fr 143px 49px;
  align-items: center;
  border-top: 1px solid #a9a7a3;
  font-size: 12px;
}
.status > span { height: 16px; display: flex; align-items: center; justify-content: center; border-right: 1px solid #929089; white-space: nowrap; }
.status > span:last-child { border-right: 0; }
.status .left { justify-content: flex-start; padding-left: 9px; }
.zoom { gap: 6px; }
.zoom svg { width: 8px; height: 8px; stroke: #8c8a87; stroke-width: 2; }
.zoom input {
  appearance: none;
  width: 97px;
  height: 14px;
  margin: 0;
  background:
    linear-gradient(#b3b1ae, #b3b1ae) center / 2px 14px no-repeat,
    linear-gradient(#b3b1ae, #b3b1ae) center / 100% 2px no-repeat;
}
.zoom input::-webkit-slider-thumb { appearance: none; width: 8px; height: 8px; border: 1px solid #8c8a87; border-radius: 50%; background: #fff; }
```

FILE: script.js
```js
// Column letters with their widths; the last one takes what is left.
const columns = [
  ['A', 61], ['B', 61], ['C', 45], ['D', 76], ['E', 53], ['F', 45], ['G', 45], ['H', 45], ['I', 45],
  ['J', 45], ['K', 45], ['L', 45], ['M', 45], ['N', 65], ['O', 45], ['P', 45], ['Q', 74], ['R', 46],
  ['S', 46], ['T', 46], ['U', 46], ['V', 46], ['W', 46], ['X', 46], ['Y', 46], ['Z', 46], ['AA', 46],
  ['AB', 46], ['AC', 46], ['AD', 45], ['AE', 179], ['AF', 45], ['AG', 45], ['AH', 45], ['AI', 0]
];
const names = columns.map(c => c[0]);
const at = name => names.indexOf(name);
const heights = { 1: 85, 2: 44, 52: 13, 53: 13, 54: 37, 55: 22, 56: 30, 57: 22, 58: 22 };
const heavyRight = new Set(['B', 'C', 'D', 'E', 'G', 'I', 'K', 'N', 'Q', 'AC', 'AD', 'AG']);
const heavyBottom = new Set([2, 3, 4, 13, 33, 51, 57]);

const cells = {};
const put = (ref, text, cls = '', cs = 1, rs = 1) => { cells[ref] = { text, cls, cs, rs }; };

put('A1', 'RETA FINAL – <span class="typo">AFRFB</span>', 'title kb', 33);
put('A2', 'Ciclo', 'cycle', 1, 3);
put('A5', '<span>o</span>', 'cyclename', 1, 54);
put('B2', 'Análise Gráfica da Curva de Esquecimento', 'section', 13);
put('O2', 'Coeficiente de Perda', 'section', 16);
put('AE2', 'Análise de Incidência', 'section subject', 3);

put('B3', 'Disciplina', 'h1g bold', 1, 2);
put('C3', 'Aula', 'h1g', 1, 2);
put('D3', 'RAI - Data', 'h1g', 1, 2);
put('E3', 'Nº questões<br>propostas', 'h1g', 1, 2);
['F', 'H', 'J'].forEach((c, i) => {
  put(c + 3, 'Sim ' + (i + 1), 'h2g', 2);
  put(c + 4, 'Data', 'h1g kr');
  put(names[at(c) + 1] + 4, 'Nota', 'h1g');
});
put('L3', 'Estatísticas', 'h2g', 3);
put('L4', '%', 'h5g'); put('M4', 'Média', 'h5g'); put('N4', 'Desvio Padrão', 'h5g');
put('O3', 'Resultado de Análise Gráfica', 'h3g', 3);
put('O4', '- %', 'h4g bold'); put('P4', 'Dias', 'h4g'); put('Q4', 'Perda / Dia (%)', 'h4g');
put('R3', 'Estimativas de Perda', 'h3g', 12);
for (let i = 0; i < 12; i++) put(names[at('R') + i] + 4, (i + 1) * 30 + ' dias', 'h4g');
put('AD3', 'Datas', 'h3g'); put('AD4', 'Data', 'h4g');

// Disciplines: name, first row, last row, first lesson number, fill
[
  ['Auditoria', 5, 13, 0, 'yellow'], ['Contabilidade', 14, 33, 0, 'yellow'], ['DT', 34, 45, 0, 'yellow'],
  ['Dt Jurisp', 46, 51, 0, 'yellow'], ['DP', 52, 57, 1, 'red'], ['', 58, 58, 0, 'yellow']
].forEach(([name, from, to, first, fill]) => {
  put('B' + from, name, fill + ' kb', 1, to - from + 1);
  for (let r = from; r <= to; r++) put('C' + r, first + r - from, name === 'DP' ? 'big' : '');
});

for (let r = 5; r <= 58; r++) {
  const error = r === 58 ? '#REF!' : '#DIV/0!';
  put('I' + r, '0'); put('K' + r, '0');
  put('L' + r, '#DIV/0!', 'bad');
  put('M' + r, '0,00'); put('N' + r, '0,00');
  put('Q' + r, error); put('R' + r, error);
  for (let c = at('S'); c <= at('AC'); c++) put(names[c] + r, '0,00%');
}

const records = {
  5: { O: '#DIV/0!', P: '#REF!' },
  6: { O: '0,0', P: '-43339', Q: '0,00%', R: '0,00%' },
  13: { D: '17/11/17', E: 24, F: '31/03/18', G: 24, H: '01/12/17', I: 23, J: '22/12/17', K: 22, L: '95,83%', M: '23,00', N: '0,58', O: '-4,17%', P: '-99', Q: '0,04%', R: '1,26%', AD: '07/04/19' },
  14: { D: '24/11/17', E: 36, F: '31/03/18', G: 35, H: '08/12/17', I: 36, J: '22/12/17', K: 35, L: '98,15%', M: '35,33', N: '0,19', O: '-1,85%', P: '14', Q: '-0,13%', R: '-3,97%', AD: '04/08/18' },
  15: { D: '03/05/18', E: 45, F: '04/05/18', G: 34, I: 34, K: 34, L: '75,56%', M: '34,00', O: '-24,44%', Q: '0,00%', R: '-0,04%', AD: '08/05/18' },
  35: { D: '23/12/17', E: 25, F: '11/02/18', G: 25, H: '07/01/18', I: 22, J: '14/01/18', K: 24, L: '94,67%', M: '23,67', N: '0,77', O: '-5,33%', P: '35', Q: '-0,15%', R: '-4,57%', AD: '13/05/18' },
  36: { Q: '0,00%', R: '-0,05%' }
};
for (const r in records) for (const c in records[r]) put(c + r, records[r][c]);
[13, 14, 35].forEach(r => { cells['L' + r].cls = 'good'; });
cells.L15.cls = 'bad';
cells.O14.cls = cells.AD14.cls = 'kb';
put('D16', '', 'selected');

// Incidence panel
const heading = (r, text, cls) => put('AE' + r, text, 'subject ' + cls, 3);
const subhead = (r, reord) => {
  put('AE' + r, 'Assunto do Edital', 'subhead');
  if (reord) { put('AF' + r, '%', 'subhead'); put('AG' + r, 'Reord', 'subhead'); }
  else put('AF' + r, '%', 'subhead', 2);
};
const topics = (start, list) => list.forEach(([text, a, b], i) => {
  const r = start + i;
  put('AE' + r, text, 'topic');
  if (b) { put('AF' + r, a + '%', 'topic'); put('AG' + r, b + '%', 'topic'); }
  else put('AF' + r, a + '%', 'adm', 2);
});

heading(3, 'Português', '');
subhead(4, true);
topics(5, [
  ['Compreensão Textual', '16,20', '16,20'], ['Ortografia e Acentuação Gráfica', '6,50', '15,50'],
  ['Semântica, Coesão e Coerência Textual', '14,10', '14,50'], ['Morfologia – Classes de Palavras', '14,50', '14,10'],
  ['Termos da Oração', '2,60', '10,50'], ['Processos de Coordenação e Subordinação', '4,60', '8,40'],
  ['Concordância (Verbal e Nominal) e Vozes Verbais', '10,50', '6,50'], ['Ordenação de Frases', '5,00', '5,00'],
  ['Regência (Verbal e Nominal) e Crase', '15,50', '4,60'], ['Pontuação', '8,40', '2,60']
]);
heading(16, 'Contabilidade', '');
subhead(17, false);
topics(18, [
  ['Balanço Patrimonial &amp; Classificação Contábil', '21,20'], ['DRE &amp; Apuração do Resultado', '9,12'],
  ['Operações com Mercadorias', '9,09'], ['Depreciação, Amortização e Exaustão', '8,10'], ['Duplicatas Descontadas', '5,50']
]);
heading(24, '<span class="typo">DT</span>', '');
subhead(25, true);
topics(26, [
  ['1 - Conceito e Classificação dos tributos', '5,64', '14,52'], ['2 - Competência Tributária', '8,06', '10,48'],
  ['3 - Limitações Constitucionais ao&nbsp; de Trib.', '14,52', '10,48'], ['4 - Tributos de Competência da União', '10,48', '8,06'],
  ['5 - Contribuições Especiais', '6,45', '7,26'], ['6 - Tributos de Competência dos Est.', '5,64', '6,45'],
  ['7 - Tributos de Competência dos Mun.', '4,03', '6,45'], ['8 - Simples', '2,42', '5,64'],
  ['9 - Legislação Tributária', '7,26', '5,64'], ['10 - Vigência da Legislação Trib.', '2,42', '5,64'],
  ['11 - Aplicação da Legislação Trib.', '1,61', '4,84'], ['12 - Interpretação e Integração da LT', '4,03', '4,03'],
  ['13 - Obrigação Tributária Principal e Acess.', '6,45', '4,03'], ['14 - Fato Gerador da Obrigação Trib.', '4,03', '4,03'],
  ['15 - Sujeição Ativa e Passiva', '4,03', '4,03'], ['16 - Domicílio Tributário', '0,00', '4,03'],
  ['17 - Responsabilidade Tributária', '5,64', '2,42'], ['18 - Crédito Tributário: conceito', '1,61', '2,42'],
  ['19 - Constituição do Crédito Trib. (<span class="typo">lanç</span>)', '4,84', '2,42'],
  ['20 - Suspensão da Exigibilidade do <span class="typo">CT</span>', '0,81', '1,61'],
  ['21 - Extinção do Crédito Tributário', '4,03', '1,61'], ['22 - Pagamento Indevido', '0,00', '1,61'],
  ['23 - Exclusão do Crédito Trib.', '1,61', '0,81'], ['24 - Garantias e Privilégios do CT', '2,42', '0,00'],
  ['25 - Administração Tributária', '10,48', '0,00']
]);
heading(52, '<span class="typo">ADM</span> Pública', 'small');
subhead(53, false);
const adm = '<span class="typo">ADM</span>';
[
  [`<span class="just">Modelo&nbsp; teóricos da ${adm} <span class="typo">Púb</span>: <span class="typo">Patri</span>; Bur; <span class="typo">Ger</span>; |</span><span class="just">Evolução dos Modelos / Paradigmas de gestão:</span><span class="typo">NPM</span>`, '22,00'],
  [`Controle da ${adm} Púb.`, '16,50'],
  [`<span class="just">Experiências de reformas administrativas |</span>Processo de modernização da ${adm} Púb.`, '12,20'],
  ['Organização do Estado e da ADM. Púb.', '10,80'],
  ['Governo Eletrônico e Transparência', '8,30']
].forEach(([text, value], i) => {
  put('AE' + (54 + i), text, 'adm left');
  put('AF' + (54 + i), value + '%', 'adm', 2);
});

// Build the table
const isTint = (r, c) => ((r >= 14 && r <= 33) || (r >= 52 && r <= 57)) && c >= at('C') && c <= at('N');
const covered = new Set();
let html = '<colgroup><col style="width:41px">' +
  columns.map(([, w]) => w ? `<col style="width:${w}px">` : '<col>').join('') + '</colgroup>';
html += '<thead><tr><th class="colhead"></th>' +
  names.map(n => `<th scope="col" class="colhead${n === 'D' ? ' cur' : ''}">${n}</th>`).join('') + '</tr></thead><tbody>';
for (let r = 1; r <= 58; r++) {
  html += `<tr style="height:${heights[r] || 11}px"><th scope="row" class="rowhead${r === 16 ? ' cur' : ''}">${r}</th>`;
  for (let c = 0; c < names.length; c++) {
    if (covered.has(r + ':' + c)) continue;
    const { text = '', cls = '', cs = 1, rs = 1 } = cells[names[c] + r] || {};
    for (let y = 0; y < rs; y++) for (let x = 0; x < cs; x++) covered.add((r + y) + ':' + (c + x));
    const list = [cls];
    if (isTint(r, c)) list.push('tint');
    if (r > 1 && heavyRight.has(names[c + cs - 1])) list.push('kr');
    if (heavyBottom.has(r + rs - 1) && c >= at('B') && c <= at('AD')) list.push('kb');
    const span = (cs > 1 ? ` colspan="${cs}"` : '') + (rs > 1 ? ` rowspan="${rs}"` : '');
    html += `<td class="${list.join(' ').trim()}"${span}>${text}</td>`;
  }
  html += '</tr>';
}
document.getElementById('sheet').innerHTML = html + '</tbody>';
```
